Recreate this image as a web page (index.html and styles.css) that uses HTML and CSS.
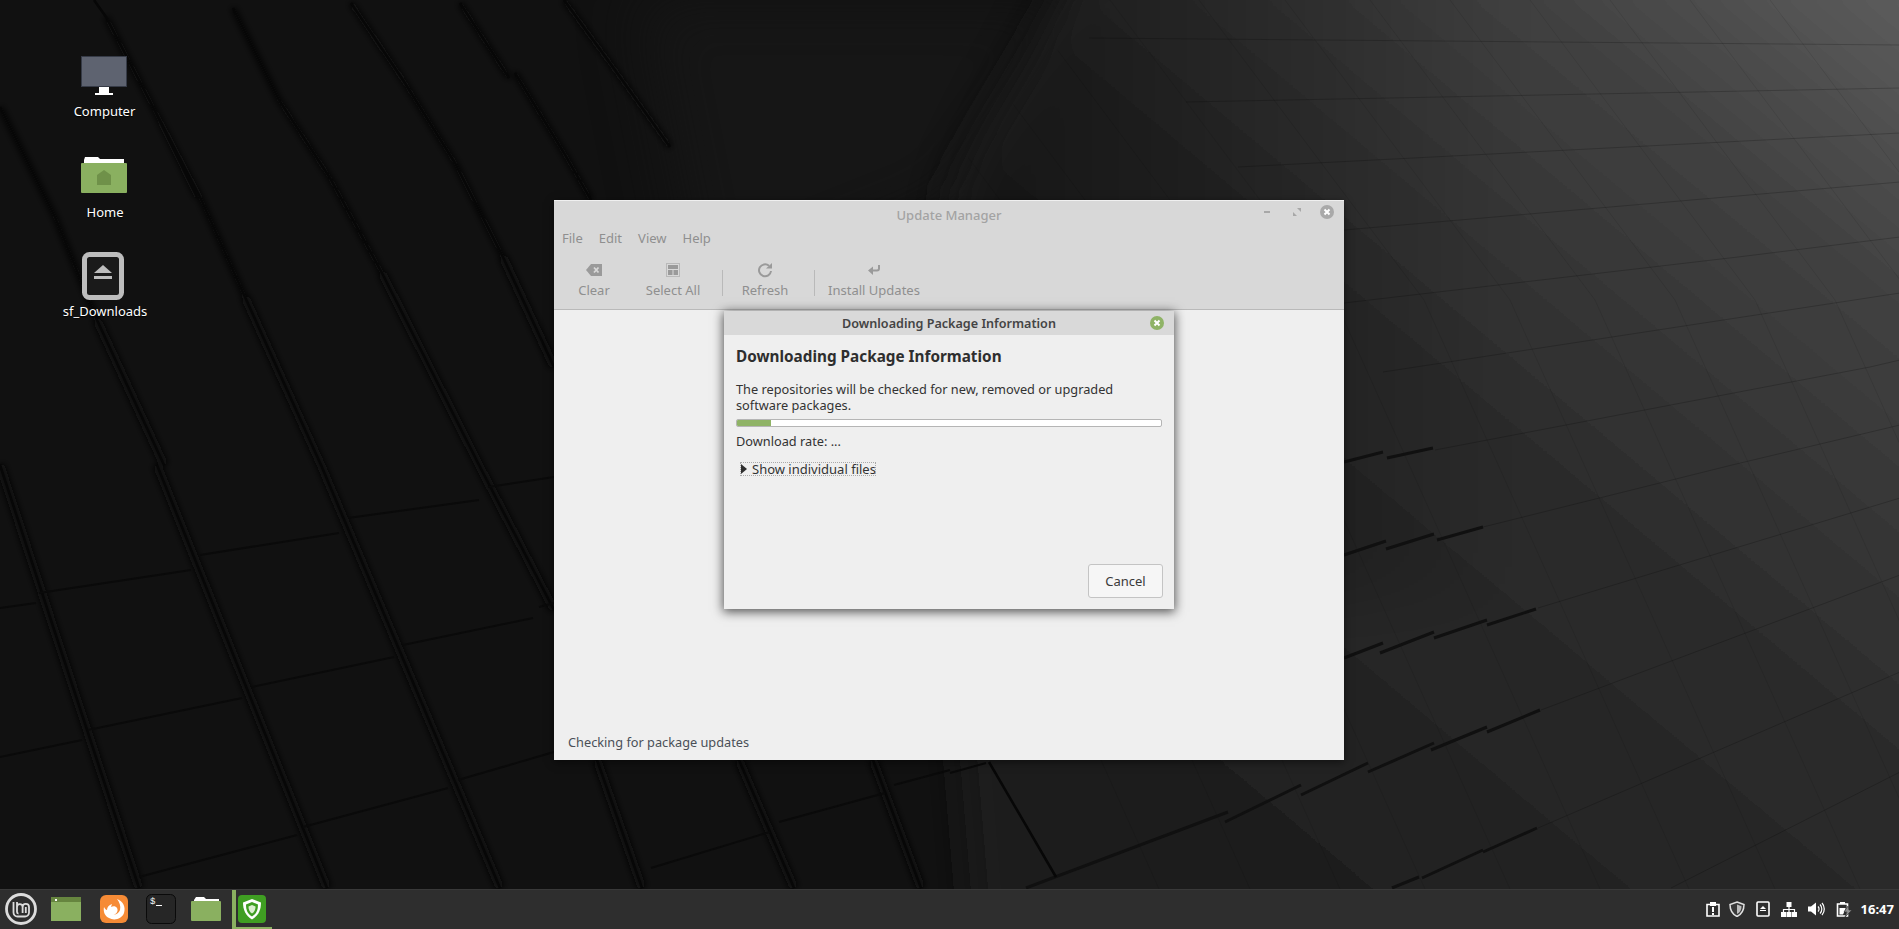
FILE: index.html
```html
<!DOCTYPE html>
<html lang="en">
<head>
<meta charset="utf-8">
<title>Update Manager</title>
<link rel="stylesheet" href="styles.css">
</head>
<body>
<div class="screen">
  <main class="desktop">
    <svg class="wallpaper" viewBox="0 0 1899 889" width="1899" height="889" aria-hidden="true">
      <defs>
        <linearGradient id="lightGrad" gradientUnits="userSpaceOnUse" x1="1899" y1="0" x2="1150" y2="889">
          <stop offset="0" stop-color="#5c5c5c"/>
          <stop offset="0.2" stop-color="#414141"/>
          <stop offset="0.5" stop-color="#2c2c2c"/>
          <stop offset="0.78" stop-color="#232323"/>
          <stop offset="1" stop-color="#1b1b1b"/>
        </linearGradient>
        <linearGradient id="edgeShade" gradientUnits="userSpaceOnUse" x1="1000" y1="0" x2="1520" y2="0">
          <stop offset="0" stop-color="#000" stop-opacity=".45"/>
          <stop offset="1" stop-color="#000" stop-opacity="0"/>
        </linearGradient>
        <filter id="soft" x="-10%" y="-10%" width="120%" height="120%"><feGaussianBlur stdDeviation="18"/></filter>
        <filter id="softWide" x="-20%" y="-20%" width="140%" height="140%"><feGaussianBlur stdDeviation="30"/></filter>
        <filter id="softer"><feGaussianBlur stdDeviation="3"/></filter>
        <clipPath id="lightClip"><path d="M1100 0H1899V889H960L930 400L950 180Z"/></clipPath>
      </defs>
      <rect class="wp-base" width="1899" height="889"/>
      <path class="wp-top" d="M640 0H1090L950 200L700 300Z"/>
      <path d="M1085 -40H1960V940H975L930 400L950 185Z" fill="url(#lightGrad)" filter="url(#soft)"/>
      <path d="M1085 -80H1560V600H975L930 400L950 185Z" fill="url(#edgeShade)" filter="url(#softWide)"/>
      <g class="wp-grid" clip-path="url(#lightClip)">
        <path d="M669 0L894 300L1159 889M760 0L985 300L1250 889M850 0L1075 300L1340 889M935 0L1160 300L1425 889M1020 0L1245 300L1510 889M1110 0L1335 300L1600 889M1199 0L1424 300L1689 889M1285 0L1510 300L1775 889M1370 0L1595 300L1860 889M1450 0L1675 300L1940 889M1530 0L1755 300L2020 889M1610 0L1835 300L2100 889M1690 0L1915 300L2180 889M1770 0L1995 300L2260 889"/>
      </g>
      <g class="wp-cross">
        <path d="M1089 38L1900 45M1186 102L1900 88M1238 167L1900 133M1344 230L1900 182M1344 303L1738 257L1900 237M1383 372L1900 293M1435 450L1870 367L1900 360M1483 527L1732 465L1900 425M1538 608L1900 498M1541 710L1900 575M1538 828L1900 672M1671 888L1900 772"/>
      </g>
      <g class="wp-ticks">
        <path d="M1344 462L1383 452M1387 458L1433 448"/>
        <path d="M1344 555L1386 541M1386 549L1434 534M1437 540L1483 527"/>
        <path d="M1344 658L1383 643M1380 653L1434 632M1434 638L1487 620M1487 625L1536 609"/>
        <path d="M1026 888L1228 812M1225 822L1301 785M1301 795L1368 763M1368 772L1434 743M1431 750L1487 727M1487 732L1540 710"/>
        <path d="M1392 888L1419 877M1422 878L1483 850M1483 852L1537 828"/>
      </g>
      <g class="wp-ridge-blur" filter="url(#softer)">
        <path class="rb-low" d="M157 465L327 888M321 465L500 888M0 465L139 888M479 465L554 610M597 760L642 888M739 760L794 888M873 760L921 888M245 297L321 465M382 273L479 465M503 257L554 367M97 320L164 465"/>
        <path class="rb-up" d="M106 17L200 197M233 8L279 100M351 3L403 80M460 3L509 78M564 0L615 70M151 103L197 197M279 100L330 178M403 80L455 163M515 73L564 153M615 70L670 147M200 197L245 297M330 178L382 273M455 163L503 257M564 153L591 200M55 217L97 320M0 107L55 217"/>
      </g>
      <g class="wp-ridge">
        <path d="M157 465L327 888M321 465L500 888M0 465L139 888M479 465L554 610M597 760L642 888M739 760L794 888M873 760L921 888M989 762L1056 877M245 297L321 465M382 273L479 465M503 257L554 367M97 320L164 465M94 0L106 17L200 197M233 8L279 100M351 3L403 80M460 3L509 78M564 0L615 70M151 103L197 197M279 100L330 178M403 80L455 163M515 73L564 153M615 70L670 147M200 197L245 297M330 178L382 273M455 163L503 257M564 153L591 200M55 217L97 320M0 107L55 217"/>
      </g>
      <g class="wp-cross-dark">
        <path d="M0 608L36 603M39 593L191 570M200 555L339 533M348 518L479 500M488 487L554 477"/>
        <path d="M0 757L82 740M88 730L242 698M252 687L394 657M403 645L533 618M539 607L554 603"/>
        <path d="M139 877L297 835M303 827L448 788M458 780L554 752M651 868L770 832M779 822L885 793M894 785L950 770M950 773L986 763"/>
      </g>
    </svg>

    <nav class="desk-icons">
      <div class="desk-item">
        <svg class="desk-svg" viewBox="0 0 48 48"><rect class="mon-frame" x="1" y="0" width="46" height="31"/><rect class="mon-screen" x="2" y="1" width="44" height="29"/><rect class="white" x="19" y="31" width="10" height="7"/><rect class="white" x="15" y="37" width="18" height="2"/></svg>
        <span class="desk-label">Computer</span>
      </div>
      <div class="desk-item">
        <svg class="desk-svg" viewBox="0 0 48 48"><path class="white" d="M4 4L5 1H18L20 3H44V12H4Z"/><rect class="folder" x="1" y="7" width="46" height="30" rx="1"/><path class="folder-dark" d="M24 14L31 19V29H17V19Z"/></svg>
        <span class="desk-label">Home</span>
      </div>
      <div class="desk-item">
        <svg class="desk-svg" viewBox="0 0 48 48"><rect class="drive" x="4.500" y="2.500" width="37" height="43" rx="5"/><path class="grey" d="M23 13L32 21H14Z"/><rect class="grey" x="14" y="24" width="18" height="3"/></svg>
        <span class="desk-label">sf_Downloads</span>
      </div>
    </nav>

    <section class="win-main">
      <header class="win-head">
        <div class="win-titlebar">
          <span class="win-title">Update Manager</span>
          <div class="win-controls">
            <svg class="ctl" viewBox="0 0 14 14"><rect class="ctl-dim" x="4" y="6" width="6" height="2"/></svg>
            <svg class="ctl" viewBox="0 0 14 14"><path class="ctl-dim" d="M7 3H11V7ZM3 7L7 11H3Z"/></svg>
            <svg class="ctl" viewBox="0 0 14 14"><circle class="ctl-circle" cx="7" cy="7" r="7"/><path class="ctl-x" d="M4.500 4.500L9.500 9.500M9.500 4.500L4.500 9.500"/></svg>
          </div>
        </div>
        <div class="menubar"><span>File</span><span>Edit</span><span>View</span><span>Help</span></div>
        <div class="toolbar">
          <div class="tool tool-clear">
            <svg class="tool-svg" viewBox="0 0 18 16"><path class="tool-fill" d="M6 2H17V14H6L1 8Z"/><path class="tool-x" d="M9 5.500L13.500 10.500M13.500 5.500L9 10.500"/></svg>
            <span>Clear</span>
          </div>
          <div class="tool tool-select">
            <svg class="tool-svg" viewBox="0 0 18 16"><rect class="tool-dots" x="2.500" y="1.500" width="13" height="13"/><rect class="tool-fill" x="4" y="3" width="10" height="4"/><rect class="tool-fill" x="4" y="8" width="4.500" height="5"/><rect class="tool-fill" x="9.500" y="8" width="4.500" height="5"/></svg>
            <span>Select All</span>
          </div>
          <div class="tool-sep"></div>
          <div class="tool tool-refresh">
            <svg class="tool-svg" viewBox="0 0 18 16"><path class="tool-line" d="M13 3.800A6 6 0 1 0 15 9"/><path class="tool-fill" d="M10 6.500H16V1Z"/></svg>
            <span>Refresh</span>
          </div>
          <div class="tool-sep"></div>
          <div class="tool tool-install">
            <svg class="tool-svg" viewBox="0 0 18 16"><path class="tool-line" d="M14 3V6.500A2 2 0 0 1 12 8.500H7"/><path class="tool-fill" d="M8 4.500V13L3 8.500Z"/></svg>
            <span>Install Updates</span>
          </div>
        </div>
      </header>
      <div class="win-body"></div>
      <footer class="statusbar">Checking for package updates</footer>
    </section>

    <section class="dialog">
      <div class="dlg-titlebar">
        <span>Downloading Package Information</span>
        <svg class="dlg-close" viewBox="0 0 14 14"><circle class="dlg-circle" cx="7" cy="7" r="7"/><path class="ctl-x" d="M4.500 4.500L9.500 9.500M9.500 4.500L4.500 9.500"/></svg>
      </div>
      <div class="dlg-body">
        <h1 class="dlg-heading">Downloading Package Information</h1>
        <p class="dlg-text">The repositories will be checked for new, removed or upgraded software packages.</p>
        <div class="progress"><div class="progress-fill"></div></div>
        <p class="dlg-rate">Download rate: ...</p>
        <div class="expander">
          <svg class="exp-arrow" viewBox="0 0 6 10"><path class="dark" d="M0 0L6 5L0 10Z"/></svg>
          <span>Show individual files</span>
        </div>
        <div class="dlg-actions"><button class="btn" type="button">Cancel</button></div>
      </div>
    </section>
  </main>

  <footer class="panel">
    <div class="slot slot-menu">
      <svg class="menu-logo" viewBox="0 0 32 32">
        <circle class="logo-ring" cx="16" cy="16" r="14.500"/>
        <path class="logo-lm" d="M8.500 9V19.500A4 4 0 0 0 12.500 23.500H20A4 4 0 0 0 24 19.500V14A3.200 3.200 0 0 0 17.600 14V20M12 9V19A1.500 1.500 0 0 0 13.500 20.500M12 14A2.800 2.800 0 0 1 17.600 14M20.800 20V14"/>
      </svg>
    </div>
    <div class="slot slot-a">
      <svg class="launch-svg" viewBox="0 0 30 24"><rect class="folder" width="30" height="24"/><rect class="folder-band" width="30" height="5"/><rect class="white" x="4" y="2" width="2" height="2"/></svg>
    </div>
    <div class="slot slot-a">
      <svg class="launch-svg" viewBox="0 0 30 30"><rect class="ff-bg" x="1" y="1" width="28" height="28" rx="6"/><path class="white" d="M18 5C24 7 27 13 25 19C23 25 15 27 10 24C6 22 4 18 5 13C6 15 7 16 8 16C8 13 10 11 13 10L12 13C14 11.500 17 12 18 14C19.500 16.500 18 20 14.500 20.500C17 21 20 19 21 16C22 12 20.500 8 18 5Z"/></svg>
    </div>
    <div class="slot slot-b">
      <svg class="launch-svg" viewBox="0 0 30 30"><rect class="term-bg" x="0.500" y="0.500" width="29" height="29" rx="5"/><text class="term-text" x="4" y="10">$</text><rect class="white" x="10" y="11" width="6" height="1"/></svg>
    </div>
    <div class="slot slot-c">
      <svg class="launch-svg" viewBox="0 0 30 24"><path class="white" d="M3 3L5 0H13L15 2H28V10H3Z"/><rect class="folder" y="4" width="30" height="20" rx="1"/></svg>
    </div>
    <div class="slot slot-win">
      <svg class="launch-svg" viewBox="0 0 28 28"><rect class="upd-bg" width="28" height="28" rx="4"/><path class="upd-shield" d="M14 4L23 7.500C23 15 20.500 20.500 14 24.500C7.500 20.500 5 15 5 7.500Z"/><path class="upd-inner" d="M14 7L20 9.500C20 15 18.500 19 14 21.500C9.500 19 8 15 8 9.500Z"/><path class="upd-core" d="M14 10L17.500 11.500C17.500 14.500 16.500 17 14 18.500C11.500 17 10.500 14.500 10.500 11.500Z"/></svg>
    </div>
    <div class="tray">
      <svg class="tray-svg tray-clip" viewBox="0 0 16 16"><path class="tray-line" d="M2 3.500H14V15H2Z"/><rect class="white" x="5" y="1" width="6" height="4"/><rect class="white" x="7" y="6" width="2" height="5"/><rect class="white" x="7" y="12" width="2" height="2"/></svg>
      <svg class="tray-svg" viewBox="0 0 16 16"><path class="tray-shield" d="M8 1L15 3.500C15 9 13 13 8 15.500C3 13 1 9 1 3.500Z"/><path class="grey" d="M8 3.500L12.500 5.200C12.500 9 11 11.500 8 13Z"/></svg>
      <svg class="tray-svg" viewBox="0 0 16 16"><rect class="tray-line" x="2" y="1" width="12" height="14" rx="1"/><path class="white" d="M8 5L11 8H5Z"/><rect class="white" x="5" y="9" width="6" height="1"/></svg>
      <svg class="tray-svg" viewBox="0 0 16 16"><rect class="white" x="5.500" y="1" width="5" height="5"/><rect class="white" y="11" width="5" height="5"/><rect class="white" x="5.500" y="11" width="5" height="5"/><rect class="white" x="11" y="11" width="5" height="5"/><path class="tray-thin" d="M8 6V11M2.500 11V8.500H13.500V11"/></svg>
      <svg class="tray-svg tray-vol" viewBox="0 0 18 16"><path class="white" d="M1 5.500H4L9 1.500V14.500L4 10.500H1Z"/><path class="tray-thin" d="M11 5.500A3.500 3.500 0 0 1 11 10.500M13 3.500A6.500 6.500 0 0 1 13 12.500M15 2A9 9 0 0 1 15 14"/></svg>
      <svg class="tray-svg tray-batt" viewBox="0 0 16 16"><path class="tray-line" d="M1.500 3H11.500V15H1.500Z"/><rect class="white" x="4" y="1" width="5" height="2"/><path class="white" d="M3.500 7H9.500V8L7 13.500H3.500Z"/><path class="bolt" d="M12 5L8 11H11L9 16L16 9H13Z"/></svg>
      <time class="clock">16:47</time>
    </div>
  </footer>
</div>
</body>
</html>
```
FILE: styles.css
```css
* { box-sizing: border-box; }
html, body { margin: 0; padding: 0; height: 100%; overflow: hidden; background: #111; }
body { font-family: "Noto Sans", "Open Sans", sans-serif; font-size: 13px; color: #3d3d3d; }
.screen { width: 1899px; height: 929px; display: flex; flex-direction: column; }
.desktop { position: relative; height: 889px; overflow: hidden; }
.wallpaper { position: absolute; left: 0; top: 0; display: block; }
.wp-base { fill: #111; }
.wp-top { fill: #161616; filter: blur(30px); }
.wp-grid path { fill: none; stroke: #000; stroke-opacity: .09; stroke-width: 1; }
.wp-cross path { fill: none; stroke: #000; stroke-opacity: .2; stroke-width: 1; }
.wp-ticks path { fill: none; stroke: #101010; stroke-width: 3; }
.rb-low { fill: none; stroke: #080808; stroke-width: 9; }
.rb-up { fill: none; stroke: #0a0a0a; stroke-width: 5; }
.wp-ridge path { fill: none; stroke: #070707; stroke-width: 2.500; }
.wp-cross-dark path { fill: none; stroke: #0a0a0a; stroke-width: 2; }

.white { fill: #fff; }
.grey { fill: #bdbdbd; }
.dark { fill: #2e2e2e; }
.folder { fill: #8ab060; }
.folder-dark { fill: #6f9149; }
.folder-band { fill: #66853f; }

.desk-icons { position: absolute; left: 54px; top: 56px; width: 100px; display: flex; flex-direction: column; }
.desk-item { height: 100px; display: flex; flex-direction: column; align-items: center; }
.desk-svg { width: 48px; height: 48px; display: block; }
.mon-frame { fill: #363b47; }
.mon-screen { fill: #5e6370; }
.drive { fill: #1a1a1a; stroke: #bdbdbd; stroke-width: 5; }
.desk-label { margin-top: -2px; margin-left: 1px; color: #fff; font-size: 13px; line-height: 18px; white-space: nowrap; text-shadow: 0 1px 1px #000; }
.desk-item:nth-child(2) .desk-label { margin-top: -1px; margin-left: 2px; }
.desk-item:nth-child(3) .desk-svg { margin-top: -4px; }
.desk-item:nth-child(3) .desk-label { margin-top: 2px; margin-left: 2px; }

.win-main { position: absolute; left: 554px; top: 200px; width: 790px; height: 560px; display: flex; flex-direction: column; background: #efefef; box-shadow: 0 2px 8px rgba(0,0,0,.5); }
.win-head { height: 110px; background: #d8d8d8; border-top: 1px solid #f0f0f0; border-bottom: 1px solid #b9b9b9; color: #8f8f8f; }
.win-titlebar { position: relative; height: 25px; display: flex; align-items: center; justify-content: center; }
.win-title { font-size: 13px; font-weight: 500; color: #a3a3a3; padding-top: 2px; }
.win-controls { position: absolute; right: 10px; top: 4px; display: flex; gap: 16px; }
.ctl { width: 14px; height: 14px; display: block; }
.ctl-dim { fill: #a8a8a8; }
.ctl-circle { fill: #a9a9a9; }
.ctl-x { fill: none; stroke: #fff; stroke-width: 2; }
.menubar { height: 24px; display: flex; align-items: center; gap: 16px; padding-left: 8px; font-size: 13px; }
.toolbar { height: 59px; display: flex; align-items: flex-start; }
.tool { flex: none; display: flex; flex-direction: column; align-items: center; padding-top: 12px; font-size: 13px; line-height: 18px; white-space: nowrap; }
.tool-svg { width: 18px; height: 16px; display: block; margin-bottom: 3px; }
.tool-clear { width: 80px; }
.tool-select { width: 88px; margin-left: -5px; }
.tool-refresh { width: 74px; margin-right: 7px; }
.tool-install { width: 108px; }
.tool-sep { flex: none; width: 1px; height: 26px; margin: 20px 5px 0 5px; background: #b9b9b9; }
.tool-fill { fill: #9a9a9a; }
.tool-x { fill: none; stroke: #d8d8d8; stroke-width: 1.800; }
.tool-line { fill: none; stroke: #9a9a9a; stroke-width: 2; }
.tool-dots { fill: none; stroke: #9a9a9a; stroke-width: 1; stroke-dasharray: 1 1; }
.win-body { flex: 1; }
.statusbar { height: 38px; padding: 11px 0 0 14px; line-height: 18px; font-size: 12.750px; color: #4a4f57; }

.dialog { position: absolute; left: 724px; top: 311px; width: 450px; height: 298px; display: flex; flex-direction: column; background: #efefef; box-shadow: 0 2px 10px 1px rgba(0,0,0,.65); }
.dlg-titlebar { position: relative; height: 24px; flex: none; display: flex; align-items: center; justify-content: center; background: #d9d9d9; font-size: 12.600px; font-weight: 600; color: #444; }
.dlg-close { position: absolute; right: 10px; top: 5px; width: 14px; height: 14px; }
.dlg-circle { fill: #8fb366; }
.dlg-body { flex: 1; display: flex; flex-direction: column; padding: 10px 12px 11px 12px; }
.dlg-heading { margin: 0; font-size: 15.300px; line-height: 22px; font-weight: 700; color: #2e2e2e; }
.dlg-text { margin: 14px 0 0; font-size: 12.750px; line-height: 16px; width: 400px; color: #333; }
.progress { height: 8px; margin-top: 6px; border: 1px solid #b5b5b5; border-radius: 2px; background: #fff; overflow: hidden; }
.progress-fill { width: 34px; height: 100%; background: #8fb366; }
.dlg-rate { margin: 5px 0 0; font-size: 12.750px; line-height: 18px; color: #333; }
.expander { display: inline-flex; align-self: flex-start; align-items: center; gap: 5px; margin: 10px 0 0 2px; height: 18px; padding: 0 2px 0 3px; outline: 1px dotted #aaa; outline-offset: -3px; font-size: 13px; color: #333; }
.exp-arrow { width: 6px; height: 10px; display: block; }
.dlg-actions { margin-top: auto; display: flex; justify-content: flex-end; }
.btn { width: 75px; height: 34px; margin-right: -1px; border: 1px solid #c4c4c4; border-radius: 3px; background: #f6f6f6; font: 13px "Noto Sans", sans-serif; color: #3a3a3a; }

.panel { height: 40px; display: flex; align-items: center; background: #2e2e2e; border-top: 1px solid #393939; position: relative; }
.slot { height: 100%; display: flex; align-items: center; justify-content: center; flex: none; }
.slot-menu { width: 42px; }
.slot-a { width: 48px; }
.slot-b { width: 46px; }
.slot-c { width: 44px; }
.slot-win { width: 40px; margin-left: 4px; border-left: 4px solid #8ab060; border-bottom: 2px solid #8ab060; padding-right: 4px; }
.menu-logo { width: 32px; height: 32px; display: block; margin-top: -2px; }
.logo-ring { fill: none; stroke: #dcdcdc; stroke-width: 2.800; }
.logo-lm { fill: none; stroke: #dcdcdc; stroke-width: 1.800; }
.launch-svg { display: block; }
.slot-a .launch-svg, .slot-b .launch-svg, .slot-c .launch-svg { width: 30px; height: 30px; margin-top: -1px; }
.slot-win .launch-svg { width: 28px; height: 28px; }
.ff-bg { fill: #f68b36; }
.term-bg { fill: #262626; stroke: #0a0a0a; }
.term-text { fill: #fff; font: 9px "Liberation Mono", monospace; }
.upd-bg { fill: #3f9e22; }
.upd-shield { fill: #fff; }
.upd-inner { fill: #3f9e22; }
.upd-core { fill: #dcefd0; }
.tray { margin-left: auto; display: flex; align-items: center; gap: 10px; padding-right: 5px; margin-top: -1px; }
.tray-svg { width: 16px; height: 16px; display: block; flex: none; }
.tray-clip { margin-right: -2px; }
.tray-vol { width: 18px; }
.tray-batt { margin-left: 1px; margin-right: -1px; }
.tray-line { fill: none; stroke: #fff; stroke-width: 1.600; }
.tray-thin { fill: none; stroke: #fff; stroke-width: 1.200; }
.tray-shield { fill: #3a3a3a; stroke: #e0e0e0; stroke-width: 1.500; }
.bolt { fill: #8f8f8f; stroke: #2e2e2e; stroke-width: .6; }
.clock { font-size: 13px; font-weight: 700; color: #fff; }
```
